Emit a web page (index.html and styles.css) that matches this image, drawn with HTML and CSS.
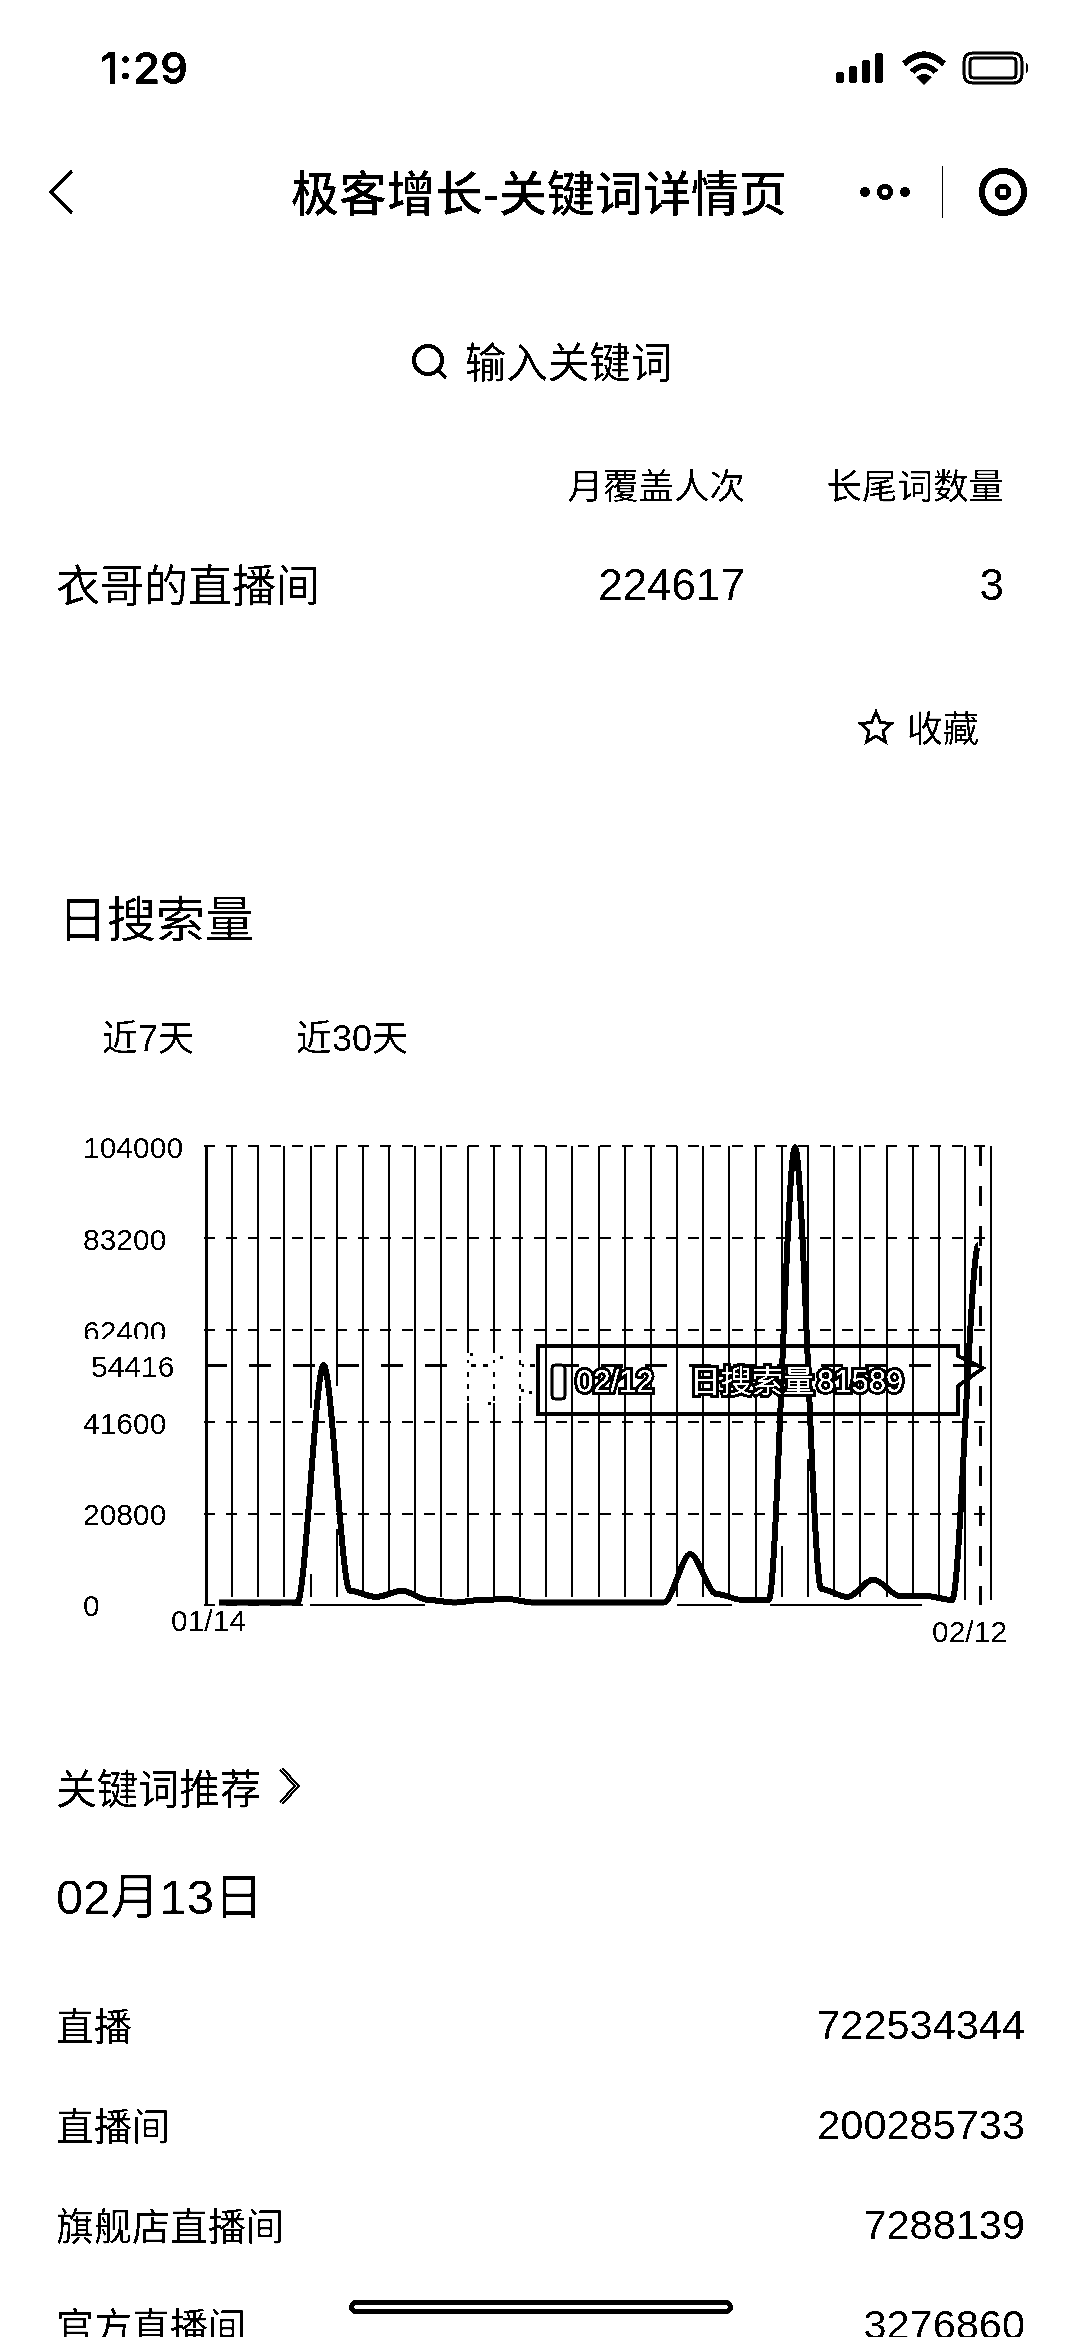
FILE: index.html
```html
<!DOCTYPE html>
<html lang="zh-CN">
<head>
    <meta charset="UTF-8">
    <meta name="viewport" content="width=device-width, initial-scale=1.0">
    <title>极客增长-关键词详情页</title>
    <link rel="stylesheet" href="styles.css">
</head>
<body>
<div class="page">
    <!-- Status bar -->
    <div class="status-bar">
        <span class="clock">1:29</span>
        <div class="status-icons">
            <svg class="icon-signal" viewBox="0 0 47 30">
                <rect x="0" y="19" width="8" height="11" rx="2"/>
                <rect x="13" y="13" width="8" height="17" rx="2"/>
                <rect x="26" y="7" width="8" height="23" rx="2"/>
                <rect x="39" y="0" width="8" height="30" rx="2"/>
            </svg>
            <svg class="icon-wifi" viewBox="0 0 46 34">
                <path class="wifi-arc" d="M3 13Q23 -6 43 13"/>
                <path class="wifi-arc" d="M11 21Q23 9 35 21"/>
                <path d="M15 26Q23 20 31 26L23 34Z"/>
            </svg>
            <svg class="icon-battery" viewBox="0 0 68 34">
                <rect class="battery-shell" x="2" y="2" width="58" height="30" rx="8"/>
                <rect class="battery-shell" x="8" y="7" width="46" height="20" rx="3"/>
                <path d="M64 12c3 1 3 9 0 10z"/>
            </svg>
        </div>
    </div>

    <!-- Nav bar -->
    <div class="nav-bar">
        <svg class="icon-back" viewBox="0 0 26 46"><path d="M24 2L3 23L24 44"/></svg>
        <h1 class="nav-title">极客增长-关键词详情页</h1>
        <div class="nav-actions">
            <svg class="icon-more" viewBox="0 0 52 16">
                <circle cx="6" cy="8" r="5"/>
                <circle class="more-ring" cx="26" cy="8" r="5.5"/>
                <circle cx="46" cy="8" r="5"/>
            </svg>
            <span class="nav-divider"></span>
            <svg class="icon-target" viewBox="0 0 48 48">
                <circle class="target-ring" cx="24" cy="24" r="21"/>
                <circle class="target-dot" cx="24" cy="24" r="6"/>
            </svg>
        </div>
    </div>

    <!-- Search -->
    <div class="search">
        <svg class="icon-search" viewBox="0 0 36 36">
            <circle cx="16" cy="16" r="14"/>
            <path d="M26 26L34 34"/>
        </svg>
        <span class="search-text">输入关键词</span>
    </div>

    <!-- Keyword summary -->
    <div class="summary summary-head">
        <span></span>
        <span class="summary-num">月覆盖人次</span>
        <span class="summary-num">长尾词数量</span>
    </div>
    <div class="summary summary-row">
        <span>衣哥的直播间</span>
        <span class="summary-num">224617</span>
        <span class="summary-num">3</span>
    </div>
    <div class="favorite">
        <svg class="icon-star" viewBox="0 0 36 36">
            <path d="M18 3L22.500 13.500L33.500 14.500L25 22L27.500 33L18 27L8.500 33L11 22L2.500 14.500L13.500 13.500Z"/>
        </svg>
        <span>收藏</span>
    </div>

    <!-- Daily search chart -->
    <h2 class="section-title">日搜索量</h2>
    <div class="tabs">
        <span>近7天</span>
        <span>近30天</span>
    </div>
    <svg class="chart" viewBox="0 1130 1080 520">
        <path class="grid-h" d="M204 1146H992M204 1238H992M204 1330H992M204 1422H992M204 1514H992M204 1605H310"/>
        <path class="axis-solid" d="M310 1605H425M677 1605H732M770 1605H922"/>
        <path class="grid-v" d="M232 1146V1597M258 1146V1597M284 1146V1597M311 1146V1408M311 1574V1597M337 1146V1386M337 1529V1597M363 1146V1597M389 1146V1597M415 1146V1597M441 1146V1597M468 1146V1597M494 1146V1597M520 1146V1597M546 1146V1597M572 1146V1597M599 1146V1597M625 1146V1597M651 1146V1597M677 1146V1597M703 1146V1597M729 1146V1597M756 1146V1597M782 1146V1415M782 1546V1597M808 1146V1415M808 1459V1597M834 1146V1597M860 1146V1597M887 1146V1597M913 1146V1597M939 1146V1597M965 1146V1600M991 1146V1600"/>
        <path class="axis-left" d="M206 1146V1605"/>
        <path class="mark-line" d="M205 1365H980"/>
        <path class="pointer-line" d="M980 1146V1605"/>
        <path class="series" d="M219 1602.600H297.400c8 0 18.200 -237.600 26.200 -237.600c8 0 18.200 225.700 26.200 225.700c8 0 18.200 6.300 26.200 6.300c8 0 18.200 -6.300 26.200 -6.300c8 0 18.200 9.300 26.200 9.300c8 0 18.200 2.600 26.200 2.600c8 0 18.200 -2.600 26.200 -2.600c8 0 18.200 -1 26.200 -1c8 0 18.200 3.600 26.200 3.600H664c8 0 18.200 -48.600 26.200 -48.600c8 0 18.200 40 26.200 40c8 0 18.200 6 26.200 6c8 0 18.200 0 26.200 0c8 0 18.200 -453 26.200 -453c8 0 18.200 442 26.200 442c8 0 18.200 8 26.200 8c8 0 18.200 -17.500 26.200 -17.500c8 0 18.200 16.500 26.200 16.500c8 0 18.200 0 26.200 0c8 0 18.200 4 26.200 4c8 0 18.200 -355 26.200 -355"/>

        <text class="chart-label" x="83" y="1158">104000</text>
        <text class="chart-label" x="83" y="1250">83200</text>
        <text class="chart-label" x="83" y="1342">62400</text>
        <rect class="label-mask" x="80" y="1339" width="110" height="44"/>
        <text class="chart-label" x="91" y="1377">54416</text>
        <text class="chart-label" x="83" y="1434">41600</text>
        <text class="chart-label" x="83" y="1525">20800</text>
        <text class="chart-label" x="83" y="1616">0</text>
        <text class="chart-label" x="171" y="1631">01/14</text>
        <text class="chart-label" x="932" y="1642">02/12</text>

        <!-- leftovers of the fading tooltip -->
        <path class="ghost-mask" d="M452 1365H530M468 1353V1403M494 1353V1403M520 1353V1403"/>
        <path class="ghost-dots" d="M521 1389h3v3h-3zM529 1391h3v3h-3zM470 1353h3v3h-3zM500 1356h3v3h-3zM488 1402h3v3h-3z"/>

        <path class="tooltip-box" d="M538 1346H958V1356L983 1368L958 1386V1414H538Z"/>
        <rect class="tooltip-mark" x="552" y="1365" width="13" height="34" rx="3"/>
        <text class="tooltip-text" x="576" y="1392">02/12</text>
        <text class="tooltip-text" x="690" y="1392">日搜索量</text>
        <text class="tooltip-text" x="817" y="1392">81589</text>
    </svg>

    <!-- Keyword recommendations -->
    <div class="rec-link">
        <span>关键词推荐</span>
        <svg class="icon-chevron" viewBox="0 0 22 38">
            <path class="chevron-out" d="M3 2L19 19L3 36"/>
            <path class="chevron-in" d="M3 2L19 19L3 36"/>
        </svg>
    </div>
    <div class="rec-date">02月13日</div>
    <div class="rec-row"><span>直播</span><span class="rec-num">722534344</span></div>
    <div class="rec-row"><span>直播间</span><span class="rec-num">200285733</span></div>
    <div class="rec-row"><span>旗舰店直播间</span><span class="rec-num">7288139</span></div>
    <div class="rec-row"><span>官方直播间</span><span class="rec-num">3276860</span></div>

    <!-- Home indicator -->
    <div class="home-bar"></div>
</div>
</body>
</html>
```

FILE: styles.css
```css
/* General styling */
html, body {
    margin: 0;
    background-color: #fff;
}
.page {
    position: relative;
    height: 2337px;
    overflow: hidden;
    background-color: #fff;
    color: #000;
    font-family: "Liberation Sans", "Noto Sans CJK SC", sans-serif;
    filter: grayscale(1) contrast(30);
}
h1, h2 {
    margin: 0;
    font-weight: normal;
}
svg {
    display: block;
}

/* Status bar */
.status-bar {
    height: 136px;
    padding: 0 50px 0 100px;
    display: flex;
    align-items: center;
    justify-content: space-between;
}
.clock {
    font-family: Inter, sans-serif;
    font-size: 44px;
    font-weight: 600;
}
.status-icons {
    display: flex;
    align-items: center;
    gap: 18px;
}
.icon-signal {
    width: 47px;
    height: 30px;
}
.icon-wifi {
    width: 46px;
    height: 34px;
}
.wifi-arc {
    fill: none;
    stroke: #000;
    stroke-width: 6;
}
.icon-battery {
    width: 68px;
    height: 34px;
    margin-left: -3px;
}
.battery-shell {
    fill: none;
    stroke: #000;
    stroke-width: 3;
}

/* Nav bar */
.nav-bar {
    height: 114px;
    padding: 0 53px 0 48px;
    display: grid;
    grid-template-columns: 1fr auto 1fr;
    align-items: center;
}
.nav-title {
    font-size: 48px;
    font-weight: 500;
    margin: -6px 0 0 3px;
}
.icon-back {
    width: 26px;
    height: 46px;
    margin-top: -2px;
    fill: none;
    stroke: #000;
    stroke-width: 4;
}
.nav-actions {
    display: flex;
    align-items: center;
    justify-content: flex-end;
    margin-top: -2px;
}
.icon-more {
    width: 52px;
    height: 16px;
}
.more-ring {
    fill: #fff;
    stroke: #000;
    stroke-width: 5;
}
.nav-divider {
    width: 1px;
    height: 52px;
    margin: 0 36px 0 31px;
    background-color: #000;
}
.icon-target {
    width: 48px;
    height: 48px;
}
.target-ring {
    fill: none;
    stroke: #000;
    stroke-width: 6;
}
.target-dot {
    fill: #fff;
    stroke: #000;
    stroke-width: 5;
}

/* Search */
.search {
    height: 80px;
    margin-top: 72px;
    padding-left: 4px;
    display: flex;
    align-items: center;
    justify-content: center;
    gap: 17px;
    font-size: 41.500px;
}
.search-text {
    margin-top: -5px;
}
.icon-search {
    width: 36px;
    height: 36px;
    fill: none;
    stroke: #000;
    stroke-width: 4;
}

/* Keyword summary */
.summary {
    padding: 0 76px 0 56px;
    display: grid;
    grid-template-columns: 1fr 200px 259px;
    align-items: center;
}
.summary-head {
    height: 80px;
    margin-top: 41px;
    font-size: 35.500px;
}
.summary-row {
    height: 80px;
    margin-top: 20px;
    font-size: 44px;
}
.summary-row .summary-num {
    margin-top: 4px;
}
.summary-num {
    text-align: right;
}
.favorite {
    height: 80px;
    margin-top: 63px;
    padding-right: 101px;
    display: flex;
    align-items: center;
    justify-content: flex-end;
    gap: 13px;
    font-size: 36px;
}
.icon-star {
    width: 36px;
    height: 36px;
    margin-top: 1px;
    fill: none;
    stroke: #000;
    stroke-width: 3;
}

/* Daily search chart */
.section-title {
    height: 80px;
    margin-top: 114px;
    padding-left: 58px;
    font-size: 49px;
    line-height: 80px;
}
.tabs {
    height: 80px;
    margin-top: 35px;
    padding-left: 102px;
    display: flex;
    align-items: center;
    gap: 102px;
    font-size: 36px;
}
.chart {
    width: 1080px;
    height: 520px;
    margin-top: 55px;
}
.grid-h, .axis-solid, .grid-v, .axis-left, .mark-line, .pointer-line {
    fill: none;
    stroke: #000;
    shape-rendering: crispEdges;
}
.grid-h {
    stroke-width: 2;
    stroke-dasharray: 11 11;
}
.axis-solid, .grid-v {
    stroke-width: 2;
}
.axis-left {
    stroke-width: 3;
}
.mark-line {
    stroke-width: 3;
    stroke-dasharray: 22 22;
}
.pointer-line {
    stroke-width: 3;
    stroke-dasharray: 20 20;
}
.series {
    fill: none;
    stroke: #000;
    stroke-width: 6;
    stroke-linejoin: round;
}
.chart-label {
    font-size: 30px;
}
.label-mask {
    fill: #fff;
}
.ghost-mask {
    fill: none;
    stroke: #fff;
    stroke-width: 4;
    stroke-dasharray: 7 5;
}
.tooltip-box {
    fill: none;
    stroke: #000;
    stroke-width: 4;
}
.tooltip-mark {
    fill: #fff;
    stroke: #000;
    stroke-width: 3;
}
.tooltip-text {
    font-size: 31px;
    fill: #fff;
    stroke: #000;
    stroke-width: 6;
    paint-order: stroke;
}

/* Keyword recommendations */
.rec-link {
    height: 80px;
    margin-top: 96px;
    padding-left: 56px;
    display: flex;
    align-items: center;
    gap: 17px;
    font-size: 41px;
}
.icon-chevron {
    width: 22px;
    height: 38px;
    fill: none;
}
.chevron-out {
    stroke: #000;
    stroke-width: 5;
}
.chevron-in {
    stroke: #fff;
    stroke-width: 1;
}
.rec-date {
    height: 80px;
    margin: 31px 0 36px;
    padding-left: 56px;
    font-size: 49px;
    line-height: 80px;
}
.rec-row {
    height: 100px;
    padding: 0 55px 0 56px;
    display: flex;
    align-items: center;
    justify-content: space-between;
    font-size: 38px;
}
.rec-num {
    margin-top: 4px;
    font-size: 41.500px;
}

/* Home indicator sits over the list */
.home-bar {
    position: absolute;
    left: 349px;
    top: 2300px;
    width: 384px;
    height: 14px;
    box-sizing: border-box;
    border: 5px solid #000;
    border-radius: 7px;
    background-color: #fff;
}
```
